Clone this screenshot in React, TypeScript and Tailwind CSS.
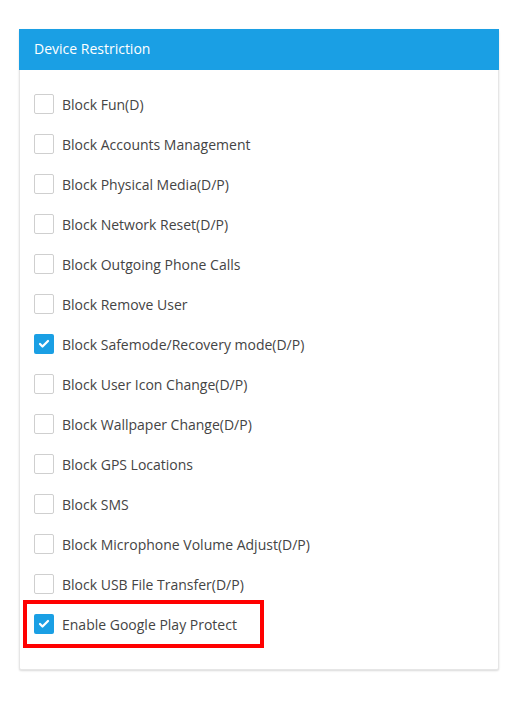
import { Check } from "lucide-react";

const items = [
  { label: "Block Fun(D)", checked: false },
  { label: "Block Accounts Management", checked: false },
  { label: "Block Physical Media(D/P)", checked: false },
  { label: "Block Network Reset(D/P)", checked: false },
  { label: "Block Outgoing Phone Calls", checked: false },
  { label: "Block Remove User", checked: false },
  { label: "Block Safemode/Recovery mode(D/P)", checked: true },
  { label: "Block User Icon Change(D/P)", checked: false },
  { label: "Block Wallpaper Change(D/P)", checked: false },
  { label: "Block GPS Locations", checked: false },
  { label: "Block SMS", checked: false },
  { label: "Block Microphone Volume Adjust(D/P)", checked: false },
  { label: "Block USB File Transfer(D/P)", checked: false },
];

function Box({ checked }: { checked: boolean }) {
  return checked ? (
    <span className="w-5 h-5 rounded-[2px] bg-[#1a9fe4] flex items-center justify-center shrink-0">
      <Check className="w-3 h-3 text-white" strokeWidth={4.5} />
    </span>
  ) : (
    <span className="w-5 h-5 rounded-[2px] border border-[#cfcfcf] bg-white shrink-0" />
  );
}

function Row({ label, checked }: { label: string; checked: boolean }) {
  return (
    <div className="h-10 flex items-center gap-2 pl-[14px]">
      <Box checked={checked} />
      <span className="text-[14px] text-[#444]">{label}</span>
    </div>
  );
}

export default function App() {
  return (
    <div
      className="bg-white min-h-[702px] pt-[29px] pl-[19px]"
      style={{ fontFamily: '"Open Sans", sans-serif' }}
    >
      <div className="w-[480px] bg-white border border-[#e6e6e6] rounded-[2px] shadow-[0_1px_2px_rgba(0,0,0,0.15)]">
        <div className="h-[41px] bg-[#1a9fe4] flex items-center pl-[15px] pb-[2px] -mx-px -mt-px">
          <span className="text-white text-[14px]">Device Restriction</span>
        </div>
        <div className="pt-[14px] pb-[25px]">
          {items.map((it) => (
            <Row key={it.label} {...it} />
          ))}
          <div className="-my-1 ml-[3px] w-[241px] border-4 border-[#f00]">
            <div className="h-10 flex items-center gap-2 pl-[7px]">
              <Box checked />
              <span className="text-[14px] text-[#444]">Enable Google Play Protect</span>
            </div>
          </div>
        </div>
      </div>
    </div>
  );
}
